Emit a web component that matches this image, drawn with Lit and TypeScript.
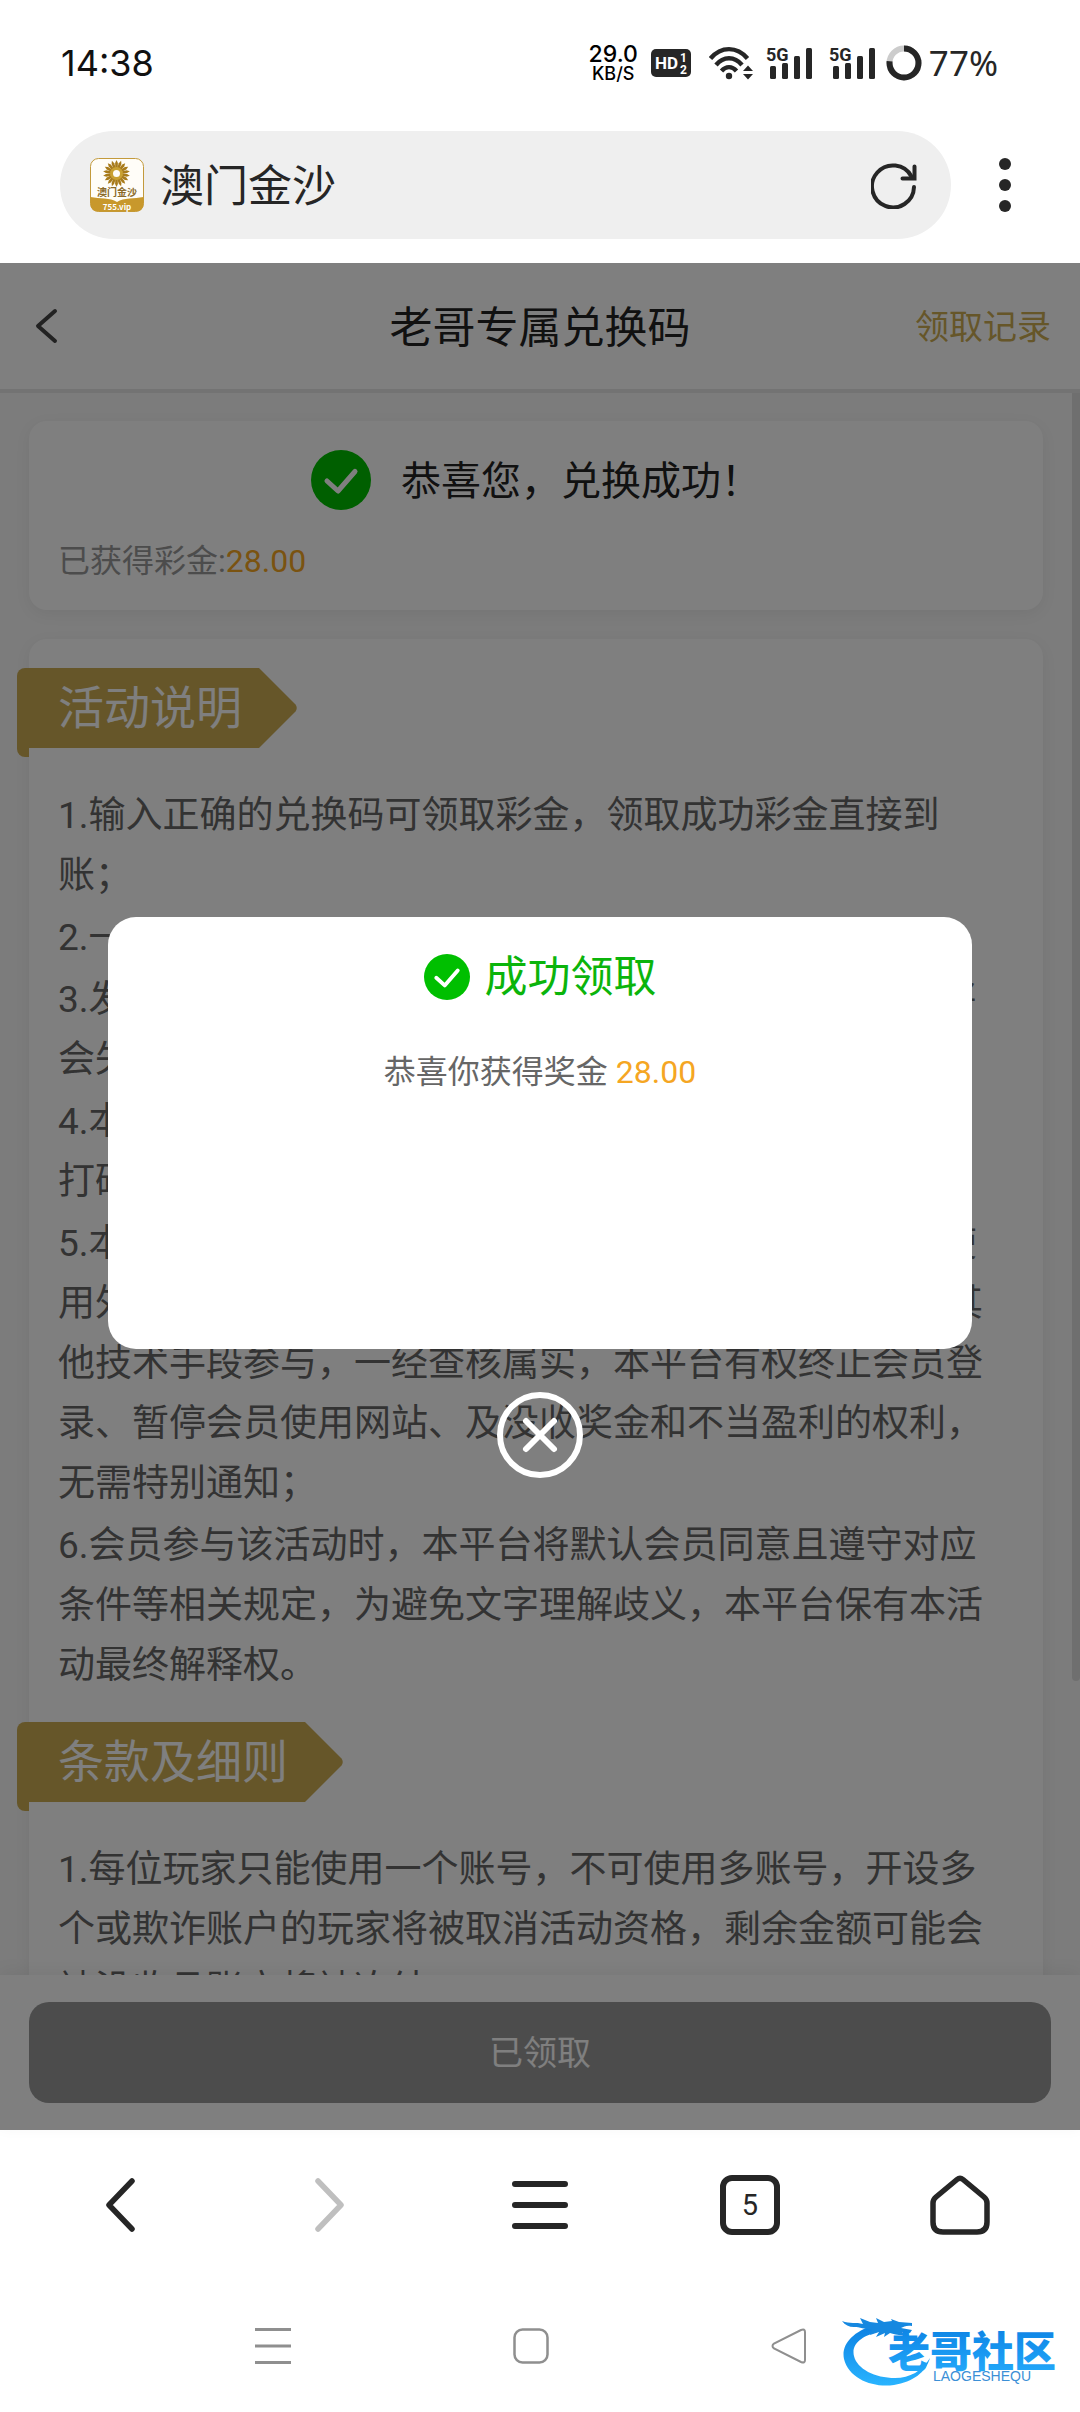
import { LitElement, html, css, svg } from "lit";
import { customElement, state } from "lit/decorators.js";

const RULES = [
  "1.输入正确的兑换码可领取彩金，领取成功彩金直接到账；",
  "2.一个会员账号仅可使用一次兑换码；",
  "3.发放的兑换码请在有效期内尽快完成兑换使用，逾期将会失效；",
  "4.本平台赠送的彩金仅需一倍流水即可提款，严禁刷水、打码套利等行为；",
  "5.本活动仅限真实的会员参与，如发现会员以任何方式使用外挂程序、机器人、多个账号、虚假资料、漏洞以及其他技术手段参与，一经查核属实，本平台有权终止会员登录、暂停会员使用网站、及没收奖金和不当盈利的权利，无需特别通知；",
  "6.会员参与该活动时，本平台将默认会员同意且遵守对应条件等相关规定，为避免文字理解歧义，本平台保有本活动最终解释权。",
];

const TERMS = [
  "1.每位玩家只能使用一个账号，不可使用多账号，开设多个或欺诈账户的玩家将被取消活动资格，剩余金额可能会被没收且账户将被冻结。",
];

const FONT = css`Roboto, "Noto Sans CJK SC", sans-serif`;

@customElement("status-bar")
class StatusBar extends LitElement {
  static styles = css`
    :host { display: block; font-family: ${FONT}; color: #262626; }
    .bar { display: flex; align-items: center; justify-content: space-between; height: 126px; padding: 0 82px 0 61px; box-sizing: border-box; }
    .clock { font: 400 36px/40px Inter, Roboto, sans-serif; color: #111; }
    .right { display: flex; align-items: center; }
    .speed { display: flex; flex-direction: column; align-items: center; font-family: Inter, Roboto, sans-serif; font-weight: 500; color: #000; margin-right: 13px; }
    .rate { font-size: 23px; line-height: 22px; }
    .unit { font-size: 18px; line-height: 18px; }
    .hd { margin-right: 18px; }
    .wifi { margin-right: 13px; }
    .cell { margin-right: 15px; }
    .cell + .cell { margin-right: 9px; }
    .ring { margin-right: 7px; }
    svg { display: block; }
    .label { font-family: "Roboto", sans-serif; font-weight: 700; }
    .battery { font: 400 35px/40px "Noto Sans", Roboto, sans-serif; }
  `;
  private signal() {
    return html`<svg class="cell" width="48" height="36" viewBox="0 0 48 36" role="img" aria-label="5G">
      <text class="label" x="0" y="16" font-size="18" fill="#262626">5G</text>
      <g fill="#262626">
        <rect x="4" y="21" width="6" height="13" rx="1.5" /><rect x="16" y="18" width="6" height="16" rx="1.5" />
        <rect x="28" y="11" width="6" height="23" rx="1.5" /><rect x="40" y="3" width="6" height="31" rx="1.5" />
      </g></svg>`;
  }
  render() {
    return html`<div class="bar">
      <span class="clock">14:38</span>
      <div class="right">
        <span class="speed"><span class="rate">29.0</span><span class="unit">KB/S</span></span>
        <svg class="hd" width="40" height="28" viewBox="0 0 40 28" role="img" aria-label="HD">
          <rect width="40" height="28" rx="5" fill="#262626" />
          <g fill="#fff" class="label"><text x="4" y="20" font-size="17">HD</text>
          <text x="29" y="13" font-size="12">1</text><text x="29" y="25" font-size="12">2</text></g>
        </svg>
        <svg class="wifi" width="44" height="36" viewBox="0 0 44 36" role="img" aria-label="WiFi">
          <g fill="none" stroke="#262626" stroke-width="4.4">
            <path d="M1.500 13.500C12 1 28 1 38.500 13.500" /><path d="M7 20C14.500 11 25.500 11 33 20" /><path d="M12.500 26C17 20.800 23 20.800 27.500 26" />
          </g>
          <circle cx="20" cy="31" r="3.200" fill="#262626" />
          <path d="M39 20.500l5 5.500H34zM39 34.500l5-5.500H34z" fill="#262626" />
        </svg>
        ${this.signal()}${this.signal()}
        <svg class="ring" width="36" height="36" viewBox="0 0 36 36" role="img" aria-label="电量">
          <g fill="none" stroke-width="6"><circle cx="18" cy="18" r="14.500" stroke="#ccc" />
          <circle cx="18" cy="18" r="14.500" stroke="#262626" pathLength="100" stroke-dasharray="77 23" transform="rotate(-90 18 18)" /></g>
        </svg>
        <span class="battery">77%</span>
      </div>
    </div>`;
  }
}

@customElement("address-bar")
class AddressBar extends LitElement {
  static styles = css`
    :host { display: block; font-family: ${FONT}; }
    .bar { display: flex; align-items: center; height: 137px; padding: 5px 0 24px 60px; box-sizing: border-box; }
    .pill { flex: 1; display: flex; align-items: center; height: 108px; border-radius: 54px; background: #efefef; padding: 0 34px 0 30px; box-sizing: border-box; }
    .site { flex: 1; margin-left: 16px; padding-top: 4px; font-size: 44px; line-height: 56px; color: #262626; }
    button { border: 0; background: none; padding: 0; display: flex; align-items: center; justify-content: center; }
    .more { width: 129px; height: 108px; padding-right: 22px; box-sizing: border-box; }
    svg { display: block; }
    .tiny { font-family: "Noto Sans CJK SC", sans-serif; font-weight: 700; }
  `;
  render() {
    const rays = Array.from({ length: 18 }, (_, i) => svg`<path d="M25.300 10.500L25.100 5L26.500 2L27.900 5L27.700 10.500Z" transform="rotate(${i * 20} 26.500 15.500)" />`);
    return html`<div class="bar">
      <div class="pill">
        <svg width="54" height="54" viewBox="0 0 54 54" aria-hidden="true">
          <rect x="0.500" y="0.500" width="53" height="53" rx="8" fill="#fffdf8" stroke="#c39a3c" />
          <path d="M0.500 39C10 41 20 39.500 27 44C34 39.500 44 41 53.500 39V45.500Q53.500 53.500 45.500 53.500H8.500Q0.500 53.500 0.500 45.500Z" fill="#c8982c" />
          <g fill="#a87b1b">${rays}</g><circle cx="26.500" cy="15.500" r="5" fill="none" stroke="#c9a132" stroke-width="3" />
          <text class="tiny" x="27" y="38" font-size="10" text-anchor="middle" fill="#8a6a2a">澳门金沙</text>
          <text class="tiny" x="27" y="52" font-size="8" text-anchor="middle" fill="#fff">755.vip</text>
        </svg>
        <span class="site">澳门金沙</span>
        <button aria-label="刷新"><svg width="46" height="48" viewBox="0 0 46 48" fill="none" stroke="#262626" stroke-width="4" stroke-linecap="round">
          <path d="M43 26A21 21 0 1 1 40.500 15.500" /><path d="M43.500 5.500V17.500H31.500" /></svg></button>
      </div>
      <button class="more" aria-label="更多"><svg width="12" height="56" viewBox="0 0 12 56" fill="#262626"><circle cx="6" cy="7" r="6" /><circle cx="6" cy="28" r="6" /><circle cx="6" cy="49" r="6" /></svg></button>
    </div>`;
  }
}

@customElement("section-tag")
class SectionTag extends LitElement {
  static styles = css`
    :host { display: block; margin-left: -12px; height: 89px; font-family: ${FONT}; }
    .row { display: flex; align-items: flex-start; }
    .label { position: relative; height: 80px; margin: 0; padding: 0 17px 0 41px; box-sizing: border-box; background: #ccac52; color: #fff; font-size: 46px; line-height: 80px; font-weight: 400; border-radius: 8px 0 0 0; }
    .label::after { content: ""; position: absolute; left: 0; top: 80px; width: 12px; height: 9px; background: #ccac52; border-radius: 0 0 0 8px; }
    svg { display: block; }
  `;
  render() {
    return html`<div class="row"><h2 class="label"><slot></slot></h2>
      <svg width="39" height="80" viewBox="0 0 39 80" aria-hidden="true"><path d="M0 0L36.500 36.500Q39 40 36.500 43.500L0 80Z" fill="#ccac52" /></svg></div>`;
  }
}

@customElement("app-root")
class AppRoot extends LitElement {
  @state() private open = true;
  static styles = css`
    :host { display: block; font-family: ${FONT}; background: #fff; color: #222; }
    .screen { display: flex; flex-direction: column; min-height: 100vh; }
    button { border: 0; background: none; padding: 0; font: inherit; color: inherit; }
    svg { display: block; }

    .page { position: relative; flex: 1 0 auto; display: flex; flex-direction: column; background: #f8f8f8; }
    .head { display: grid; grid-template-columns: 1fr auto 1fr; align-items: center; height: 130px; padding: 0 29px; border-bottom: 4px solid #e6e6e6; background: #fff; box-sizing: border-box; }
    .back { justify-self: start; padding-left: 5px; }
    .title { margin: 0; padding-top: 4px; font-size: 43px; line-height: 56px; font-weight: 400; color: #222; }
    .history { justify-self: end; padding-top: 2px; font-size: 34px; line-height: 44px; color: #ccac52; text-decoration: none; }

    .scroll { position: relative; flex: 1 1 0; min-height: 1582px; overflow: hidden; }
    .feed { display: flex; flex-direction: column; gap: 29px; padding: 28px 37px 29px 29px; }
    .thumb { position: absolute; right: 0; top: 0; width: 8px; height: 1288px; background: #dedede; border-radius: 0 0 4px 4px; }
    .card { background: #fff; border-radius: 18px; box-shadow: 0 4px 16px rgba(0, 0, 0, 0.06); padding: 29px; }
    .result { display: flex; flex-direction: column; gap: 28px; }
    .success { display: flex; align-items: center; justify-content: center; gap: 30px; font-size: 40px; line-height: 56px; color: #222; }
    .success span { padding-top: 4px; }
    .bonus { padding-top: 3px; font-size: 32px; line-height: 40px; color: #999; }
    .amount { color: #f5a623; }
    .detail { padding: 29px 38px 29px 0; }
    .rules { list-style: none; margin: 29px 0 26px; padding: 0 0 0 29px; display: flex; flex-direction: column; gap: 2px; font-size: 37px; line-height: 60px; color: #666; }

    .foot { position: relative; background: #fff; padding: 27px 29px; box-shadow: 0 -4px 16px rgba(0, 0, 0, 0.06); }
    .claimed { display: block; width: 100%; height: 101px; border-radius: 20px; background: #999; color: #fff; font-size: 34px; line-height: 44px; }

    .mask { position: absolute; inset: 0; display: flex; flex-direction: column; align-items: center; gap: 43px; padding-top: 654px; background: rgba(0, 0, 0, 0.5); box-sizing: border-box; }
    .dialog { width: 80%; height: 432px; border-radius: 28px; background: #fff; padding-top: 31px; box-sizing: border-box; text-align: center; }
    .won { display: flex; align-items: center; justify-content: center; gap: 15px; margin: 0; font-size: 43px; line-height: 58px; font-weight: 400; color: #0bb40b; }
    .prize { margin: 44px 0 0; font-size: 32px; line-height: 44px; color: #666; }

    .tools { display: grid; grid-template-columns: repeat(5, 1fr); height: 150px; padding: 0 15px; }
    .tools button { display: flex; align-items: center; justify-content: center; }
    .tabs { width: 60px; height: 60px; border: 6px solid #262626; border-radius: 12px; box-sizing: border-box; font-size: 29px; line-height: 48px; color: #262626; }
    .system { position: relative; height: 132px; display: grid; grid-template-columns: repeat(3, 1fr); padding: 0 162px 0 144px; }
    .system button { display: flex; align-items: center; justify-content: center; }
    .mark { position: absolute; right: 10px; bottom: 20px; }
    .brand { font-family: "Noto Sans CJK SC", sans-serif; font-weight: 900; }
    .latin { font-family: "Liberation Sans", sans-serif; }
  `;

  private check(size: number) {
    return html`<svg width=${size} height=${size} viewBox="0 0 60 60" aria-hidden="true"><circle cx="30" cy="30" r="30" fill="#00bf00" />
      <path d="M16 31L27 41L44 21.500" fill="none" stroke="#fff" stroke-width="5" stroke-linecap="round" stroke-linejoin="round" /></svg>`;
  }

  private dialog() {
    return html`<div class="mask">
      <div class="dialog" role="dialog" aria-labelledby="won">
        <h2 class="won" id="won">${this.check(46)}成功领取</h2>
        <p class="prize">恭喜你获得奖金 <span class="amount">28.00</span></p>
      </div>
      <button aria-label="关闭" @click=${() => (this.open = false)}>
        <svg width="86" height="86" viewBox="0 0 86 86" fill="none" stroke="#fff" stroke-linecap="round"><circle cx="43" cy="43" r="40" stroke-width="6" /><path d="M29 29L57 57M57 29L29 57" stroke-width="6" /></svg>
      </button>
    </div>`;
  }

  render() {
    return html`<div class="screen">
      <status-bar></status-bar>
      <address-bar></address-bar>
      <main class="page">
        <header class="head">
          <button class="back" aria-label="返回"><svg width="24" height="36" viewBox="0 0 24 36" fill="none" stroke="#444" stroke-width="4" stroke-linecap="round" stroke-linejoin="round"><path d="M21 3L4 18L21 33" /></svg></button>
          <h1 class="title">老哥专属兑换码</h1>
          <a class="history" href="#history">领取记录</a>
        </header>
        <div class="scroll">
          <div class="feed">
            <section class="card result">
              <div class="success">${this.check(60)}<span>恭喜您，兑换成功！</span></div>
              <div class="bonus">已获得彩金:<span class="amount">28.00</span></div>
            </section>
            <section class="card detail">
              <section-tag>活动说明</section-tag>
              <ul class="rules">${RULES.map((t) => html`<li>${t}</li>`)}</ul>
              <section-tag>条款及细则</section-tag>
              <ul class="rules">${TERMS.map((t) => html`<li>${t}</li>`)}</ul>
            </section>
          </div>
          <div class="thumb"></div>
        </div>
        <footer class="foot"><button class="claimed" disabled>已领取</button></footer>
        ${this.open ? this.dialog() : ""}
      </main>
      <nav class="tools">
        <button aria-label="后退"><svg width="30" height="54" viewBox="0 0 30 54" fill="none" stroke="#262626" stroke-width="5.500" stroke-linecap="round" stroke-linejoin="round"><path d="M27 3L4 27L27 51" /></svg></button>
        <button aria-label="前进"><svg width="30" height="54" viewBox="0 0 30 54" fill="none" stroke="#bfbfbf" stroke-width="5.500" stroke-linecap="round" stroke-linejoin="round"><path d="M3 3L26 27L3 51" /></svg></button>
        <button aria-label="菜单"><svg width="58" height="50" viewBox="0 0 58 50" stroke="#262626" stroke-width="6" stroke-linecap="round"><path d="M4 4H54M4 25H54M4 46H54" /></svg></button>
        <button aria-label="标签页"><span class="tabs">5</span></button>
        <button aria-label="主页"><svg width="60" height="60" viewBox="0 0 60 60" fill="none" stroke="#262626" stroke-width="5.500" stroke-linejoin="round"><path d="M27 4.500Q30 2 33 4.500L54 22Q57 24.500 57 28V47Q57 57 47 57H13Q3 57 3 47V28Q3 24.500 6 22Z" /></svg></button>
      </nav>
      <div class="system">
        <button aria-label="最近任务"><svg width="36" height="36" viewBox="0 0 36 36" stroke="#8f8f8f" stroke-width="3"><path d="M0 1.500H36M0 18H36M0 34.500H36" /></svg></button>
        <button aria-label="桌面"><svg width="36" height="36" viewBox="0 0 36 36" fill="none" stroke="#8f8f8f" stroke-width="2.500"><rect x="1.500" y="1.500" width="33" height="33" rx="8" /></svg></button>
        <button aria-label="返回上一级"><svg width="36" height="36" viewBox="0 0 36 36" fill="none" stroke="#8f8f8f" stroke-width="2"><path d="M3 15.500Q0 18 3 20.500L30 34Q34 35.500 34 32V4Q34 0.500 30 2Z" /></svg></button>
        <svg class="mark" width="228" height="76" viewBox="0 0 228 76" role="img" aria-label="老哥社区 LAOGESHEQU">
          <defs><linearGradient id="blue" x1="0" y1="0" x2="0" y2="1"><stop offset="0" stop-color="#0c80e2" /><stop offset="1" stop-color="#29b4ff" /></linearGradient>
          <linearGradient id="type" x1="0" y1="0" x2="0" y2="1"><stop offset="0.200" stop-color="#0f86e6" /><stop offset="0.900" stop-color="#22a8fa" /></linearGradient></defs>
          <path d="M32 9C10 16 -1 29 2 43C7 63 31 72 52 69C71 66 84 56 88 42C80 55 68 62 53 62C33 62 15 53 12 40C9 28 20 19 40 15Z" fill="url(#blue)" />
          <path d="M0 5C8 8 14 6 21 8L18 2L28 6L36 7L34 2L42 6L50 5L49 3L57 6L70 7L70 10C64 9 62 11 59 12L70 14L68 17L60 16L64 19C58 20 52 18 48 17L42 21L43 17L34 21L37 16L28 19L30 14C22 13 18 11 12 11C7 11 3 9 0 5Z" fill="#1688e0" />
          <text class="brand" x="46" y="51" font-size="42" fill="url(#type)">老哥社区</text>
          <text class="latin" x="91" y="65" font-size="14" fill="#3b8fd6">LAOGESHEQU</text>
        </svg>
      </div>
    </div>`;
  }
}
